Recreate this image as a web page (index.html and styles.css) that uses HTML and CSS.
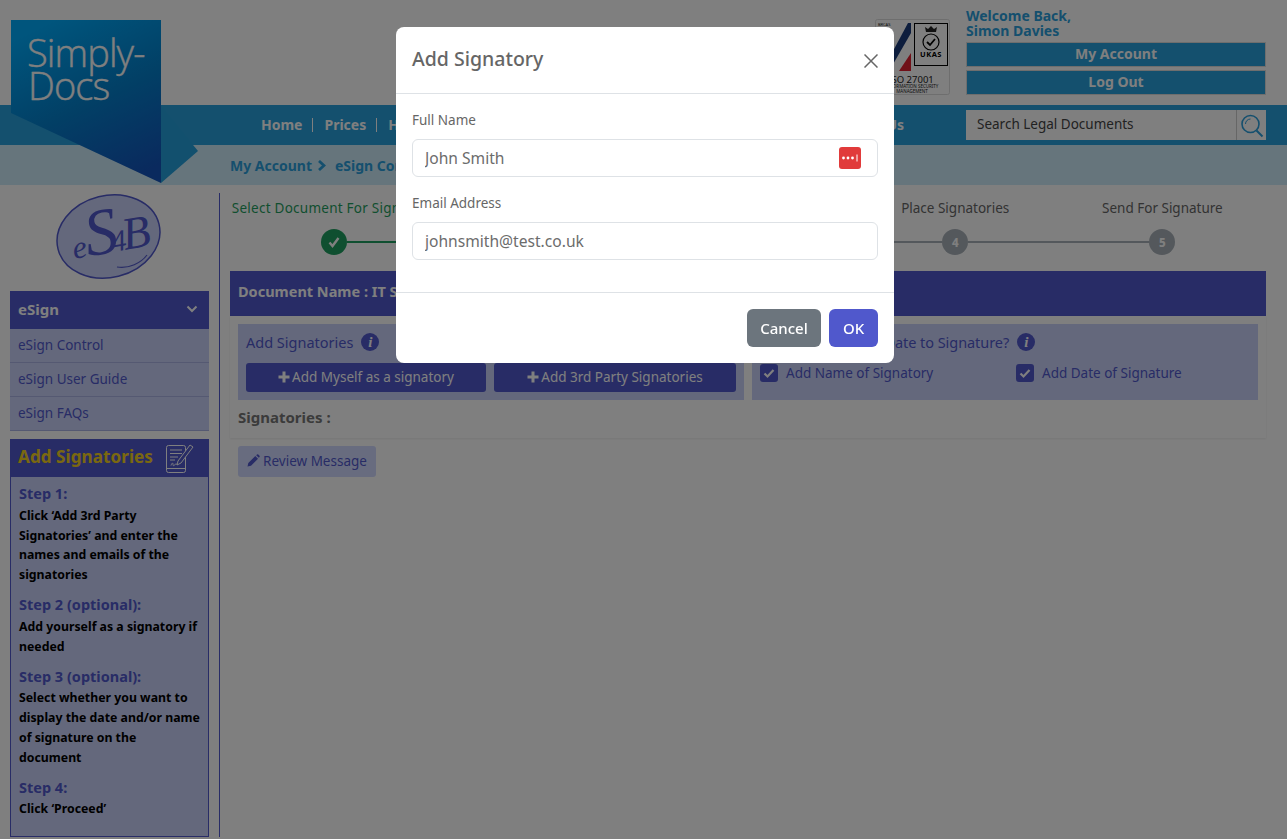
FILE: index.html
```html
<!DOCTYPE html>
<html lang="en">
<head>
<meta charset="utf-8">
<title>Add Signatory</title>
<link rel="stylesheet" href="styles.css">
</head>
<body>
<div class="logo">
  <svg width="187" height="163" viewBox="0 0 187 163">
    <defs><linearGradient id="lg" x1="0.3" y1="0" x2="0.75" y2="1"><stop offset="0" stop-color="#00aafa"/><stop offset="0.5" stop-color="#0480cc"/><stop offset="1" stop-color="#1454bc"/></linearGradient></defs>
    <polygon points="150,86 187,131 150,163" fill="#24a0dc"/>
    <polygon points="0,0 150,0 150,163 0,93" fill="url(#lg)"/>
    <text x="16" y="47" class="logo-text">Simply-</text>
    <text x="17" y="80" class="logo-text">Docs</text>
  </svg>
</div>
<header class="top">
  <div class="iso">
    <svg width="75" height="76" viewBox="0 0 75 76">
      <rect x="0.500" y="0.500" width="74" height="75" rx="2" fill="#fff" stroke="#ddd"/>
      <text x="3" y="7" class="iso-t">BRCAS</text>
      <polygon points="33,4 36,4 36,14 17,47 10,47" fill="#1a3a7a"/>
      <polygon points="36,34 36,52 24,52" fill="#e02030"/>
      <rect x="39.500" y="4.500" width="33" height="42" fill="#fff" stroke="#000"/>
      <path d="M51 13h10l1-5-3 2-3-3-3 3-3-2z" fill="#222"/>
      <circle cx="56" cy="23" r="8" fill="none" stroke="#000" stroke-width="1.200"/>
      <path d="M52 23l3 3 5-6" fill="none" stroke="#000" stroke-width="1.800"/>
      <text x="56" y="38" class="ukas">UKAS</text>
      <text x="36" y="64" class="iso-n">ISO 27001</text>
      <text x="37" y="69" class="iso-s">INFORMATION SECURITY</text>
      <text x="37" y="74" class="iso-s">MANAGEMENT</text>
    </svg>
  </div>
  <div class="account">
    <p class="welcome">Welcome Back,<br>Simon Davies</p>
    <a class="acct-btn">My Account</a>
    <a class="acct-btn">Log Out</a>
  </div>
</header>
<nav class="nav">
  <ul class="nav-list">
    <li>Home</li><li>Prices</li><li>Help</li>
  </ul>
  <span class="nav-end">Contact Us</span>
  <div class="search">
    <span class="search-text">Search Legal Documents</span>
    <span class="search-btn">
      <svg width="26" height="26" viewBox="0 0 26 26"><circle cx="11.500" cy="12" r="8.500" fill="none" stroke="#2a9fdc" stroke-width="1.600"/><path d="M6.500 12a5 5 0 0 1 5-5" fill="none" stroke="#2a9fdc" stroke-width="1"/><path d="M17.500 18.500l6 6" stroke="#2a9fdc" stroke-width="2"/></svg>
    </span>
  </div>
</nav>
<div class="crumbs"><span>My Account</span><svg class="crumb-sep" width="9" height="11" viewBox="0 0 9 11"><path d="M2 1l5 4.500-5 4.500" fill="none" stroke="#2a9fdc" stroke-width="2.800"/></svg><span>eSign Control</span></div>
<main class="main">
  <aside class="side">
    <div class="e4b">
      <svg width="108" height="90" viewBox="0 0 108 90">
        <ellipse cx="53.500" cy="43.500" rx="52" ry="41" transform="rotate(-14 53.500 43.500)" fill="#c9d1f8" stroke="#5058cc" stroke-width="1.500"/>
        <text x="17" y="60" class="e4b-text" transform="rotate(-10 52 50)"><tspan class="e4b-e">e</tspan><tspan class="e4b-s">S</tspan><tspan class="e4b-4">4</tspan><tspan class="e4b-b">B</tspan></text>
        <path d="M62 74c12 2 24-4 30-12" fill="none" stroke="#5058cc" stroke-width="1.200"/>
      </svg>
    </div>
    <section class="menu">
      <h2 class="menu-head">eSign<svg width="12" height="8" viewBox="0 0 12 8"><path d="M1.500 1.500l4.500 4.500 4.500-4.500" fill="none" stroke="#fff" stroke-width="2"/></svg></h2>
      <a class="menu-item">eSign Control</a>
      <a class="menu-item">eSign User Guide</a>
      <a class="menu-item">eSign FAQs</a>
    </section>
    <section class="help">
      <h2 class="help-head"><span class="help-title">Add Signatories</span>
        <svg width="28" height="30" viewBox="0 0 28 30" fill="none" stroke="#fff" stroke-width="1"><rect x="0.500" y="2.500" width="19" height="27" rx="2"/><path d="M0.500 25.500h19M4 7h12M4 10.500h12M4 14h8M4 17h5"/><path d="M5 22.500c1-3 2-3 2-1s1 1 2 0 2 0 3 0"/><path d="M12 18L24 2l3 2-12 16-4 2z" fill="#5058cc"/></svg>
      </h2>
      <div class="help-body">
        <h3>Step 1:</h3>
        <p>Click ‘Add 3rd Party Signatories’ and enter the names and emails of the signatories</p>
        <h3>Step 2 (optional):</h3>
        <p>Add yourself as a signatory if needed</p>
        <h3>Step 3 (optional):</h3>
        <p>Select whether you want to display the date and/or name of signature on the document</p>
        <h3>Step 4:</h3>
        <p>Click ‘Proceed’</p>
      </div>
    </section>
  </aside>
  <div class="content">
    <ol class="steps">
      <li class="step done"><span class="step-label">Select Document For Signature</span><span class="step-row"><i class="ln blank"></i><b class="dot"><svg width="14" height="14" viewBox="0 0 14 14"><path d="M2.500 7.500l3 3.500 6-8" fill="none" stroke="#fff" stroke-width="2.400"/></svg></b><i class="ln"></i></span></li>
      <li class="step done"><span class="step-label">Add Signatories</span><span class="step-row"><i class="ln"></i><b class="dot">2</b><i class="ln"></i></span></li>
      <li class="step"><span class="step-label">Add Message</span><span class="step-row"><i class="ln"></i><b class="dot">3</b><i class="ln"></i></span></li>
      <li class="step"><span class="step-label">Place Signatories</span><span class="step-row"><i class="ln"></i><b class="dot">4</b><i class="ln"></i></span></li>
      <li class="step"><span class="step-label">Send For Signature</span><span class="step-row"><i class="ln"></i><b class="dot">5</b><i class="ln blank"></i></span></li>
    </ol>
    <div class="doc-bar">Document Name : IT Services Agreement</div>
    <div class="card">
      <div class="panels">
        <section class="panel">
          <h3 class="panel-title">Add Signatories <b class="info">i</b></h3>
          <div class="panel-row">
            <a class="btn-primary"><svg class="plus" width="12" height="12" viewBox="0 0 12 12"><path d="M6 0.500v11M0.500 6h11" stroke="#fff" stroke-width="3"/></svg>Add Myself as a signatory</a>
            <a class="btn-primary"><svg class="plus" width="12" height="12" viewBox="0 0 12 12"><path d="M6 0.500v11M0.500 6h11" stroke="#fff" stroke-width="3"/></svg>Add 3rd Party Signatories</a>
          </div>
        </section>
        <section class="panel">
          <h3 class="panel-title panel-title-tight">Add Name and/or Date to Signature? <b class="info">i</b></h3>
          <div class="check-row">
            <label class="check"><svg width="18" height="18" viewBox="0 0 18 18"><rect width="18" height="18" rx="3" fill="#5058cc"/><path d="M4.500 9.500l3 3 6-6.500" fill="none" stroke="#fff" stroke-width="2.200"/></svg>Add Name of Signatory</label>
            <label class="check"><svg width="18" height="18" viewBox="0 0 18 18"><rect width="18" height="18" rx="3" fill="#5058cc"/><path d="M4.500 9.500l3 3 6-6.500" fill="none" stroke="#fff" stroke-width="2.200"/></svg>Add Date of Signature</label>
          </div>
        </section>
      </div>
      <p class="signatories">Signatories :</p>
    </div>
    <a class="btn-review"><svg width="13" height="13" viewBox="0 0 13 13"><path d="M0.500 12.500l0.800-3.500 7-7 2.700 2.700-7 7zM9.200 1.200l0.800-0.700a1 1 0 0 1 1.300 0l1.200 1.200a1 1 0 0 1 0 1.300l-0.700 0.800z" fill="#5058cc"/></svg>Review Message</a>
  </div>
</main>
<div class="backdrop"></div>
<div class="modal" role="dialog">
  <div class="modal-head">
    <h1>Add Signatory</h1>
    <svg width="14" height="14" viewBox="0 0 14 14"><path d="M0.500 0.500l13 13M13.500 0.500l-13 13" stroke="#666" stroke-width="1.500"/></svg>
  </div>
  <div class="modal-body">
    <label class="field-label">Full Name</label>
    <div class="input-wrap">
      <input class="field" value="John Smith" readonly>
      <span class="pw-icon"><svg width="22" height="22" viewBox="0 0 22 22"><rect width="22" height="22" rx="3" fill="#e13b3b"/><circle cx="4.500" cy="11" r="1.400" fill="#fff"/><circle cx="9" cy="11" r="1.400" fill="#fff"/><circle cx="13.500" cy="11" r="1.400" fill="#fff"/><path d="M18 7.500v7" stroke="#fff"/></svg></span>
    </div>
    <label class="field-label">Email Address</label>
    <input class="field" value="johnsmith@test.co.uk" readonly>
  </div>
  <div class="modal-foot">
    <button class="btn btn-cancel">Cancel</button>
    <button class="btn btn-ok">OK</button>
  </div>
</div>
</body>
</html>
```
FILE: styles.css
```css
* { box-sizing: border-box; }
html, body { margin: 0; height: 100%; overflow: hidden; }
body { font-family: "Noto Sans", "Open Sans", sans-serif; background: #fff; color: #333; font-size: 14px; }
ul, ol { list-style: none; margin: 0; padding: 0; }
h1, h2, h3, p { margin: 0; }

.logo { position: absolute; left: 11px; top: 20px; width: 187px; height: 163px; z-index: 2; }
.logo svg { display: block; }
.logo-text { font-family: "Open Sans", sans-serif; font-weight: 300; font-size: 38px; letter-spacing: -0.900px; fill: #fff; stroke: #fff; stroke-width: .4px; }

.top { height: 105px; display: flex; justify-content: flex-end; padding: 8px 21px 0 0; }
.iso { margin: 11px 16px 0 0; height: 76px; }
.iso svg { display: block; }
.iso-t { font-size: 4px; fill: #222; }
.ukas { font-size: 7.500px; font-weight: 700; text-anchor: middle; letter-spacing: .5px; fill: #000; }
.iso-n { font-size: 9.500px; text-anchor: middle; fill: #222; }
.iso-s { font-size: 4.500px; text-anchor: middle; fill: #222; }
.account { width: 300px; }
.welcome { color: #2a9fdc; font-weight: 700; font-size: 14px; line-height: 15px; margin-bottom: 4px; }
.acct-btn { display: block; height: 25px; margin-bottom: 3px; border: 1px solid #ddd; background: #28a0dc; color: #fff; font-weight: 700; font-size: 14px; line-height: 22px; text-align: center; }

.nav { height: 40px; background: #28a0dc; display: flex; align-items: center; padding: 0 21px 0 261px; color: #fff; font-weight: 700; font-size: 14px; }
.nav-list { display: flex; margin-bottom: 1px; }
.nav-list li { padding-right: 10px; margin-right: 11px; border-right: 1px solid #fff; line-height: 14px; }
.nav-end { margin-left: auto; margin-right: 62px; margin-bottom: 1px; }
.search { width: 300px; height: 30px; background: #fff; display: flex; align-items: center; }
.search-text { flex: 1; padding: 0 0 3px 11px; color: #444; font-weight: 400; font-size: 13.500px; }
.search-btn { width: 30px; height: 30px; border-left: 1px solid #ccc; display: flex; align-items: center; justify-content: center; }

.crumbs { height: 40px; background: #cdebf8; display: flex; align-items: center; gap: 5px; padding-left: 230px; color: #2a9fdc; font-weight: 700; font-size: 14px; }
.crumb-sep { margin: 0 4px 0 0; }

.main { display: flex; height: 652px; padding: 8px 21px 0 10px; gap: 10px; align-items: stretch; }
.side { width: 199px; flex: none; }
.e4b { height: 98px; display: flex; justify-content: center; }
.e4b svg { display: block; margin-left: -1px; }
.e4b-text { font-family: "Liberation Serif", serif; font-style: italic; fill: #5058cc; }
.e4b-e { font-size: 32px; }
.e4b-s { font-size: 66px; letter-spacing: -8px; }
.e4b-4 { font-size: 30px; letter-spacing: -3px; }
.e4b-b { font-size: 46px; }

.menu-head { height: 38px; background: #5058cc; color: #fff; font-size: 15px; font-weight: 700; display: flex; align-items: center; justify-content: space-between; padding: 0 11px 2px 8px; }
.menu-item { display: block; height: 34px; background: #c9d1f8; color: #5058cc; font-size: 13.500px; line-height: 32px; padding-left: 8px; border-bottom: 1px solid #aab2e4; }
.help { margin-top: 8px; }
.help-head { height: 38px; background: #5058cc; color: #f5d020; font-weight: 700; display: flex; align-items: center; justify-content: space-between; padding: 0 15px 0 8px; }
.help-title { font-size: 17.200px; margin-bottom: 3px; }
.help-body { height: 360px; background: #c9d1f8; border: 1px solid #5058cc; border-top: 0; padding: 6px 7px 0 8px; }
.help-body h3 { color: #5058cc; font-size: 14.500px; font-weight: 700; line-height: 20px; margin-bottom: 2.800px; }
.help-body p { color: #000; font-size: 12.300px; font-weight: 700; line-height: 19.700px; margin-bottom: 9.400px; }

.content { flex: 1; border-left: 1px solid #5058cc; padding-left: 10px; }
.steps { display: grid; grid-template-columns: repeat(5, 1fr); height: 78px; }
.step { display: flex; flex-direction: column; align-items: center; color: #666; font-size: 13.500px; }
.step-label { line-height: 18px; margin-top: 6px; white-space: nowrap; }
.step-row { display: flex; align-items: center; width: 100%; margin-top: 12px; }
.ln { flex: 1; height: 2px; background: #a8b0b8; }
.ln.blank { background: transparent; }
.dot { width: 26px; height: 26px; border-radius: 50%; background: #a8b0b8; color: #fff; font-size: 11.500px; font-weight: 800; display: flex; align-items: center; justify-content: center; }
.step.done { color: #1f9e60; }
.done .step-label { letter-spacing: .25px; }
.done .dot { background: #1f9e60; }
.done .ln { background: #1f9e60; }
.done .ln.blank { background: transparent; }

.doc-bar { height: 45px; background: #5058cc; color: #fff; font-weight: 700; font-size: 14.500px; padding: 10px 8px 0; line-height: 20px; }
.card { height: 122px; padding: 8px; box-shadow: 0 1px 2px rgba(0,0,0,.08); }
.panels { display: grid; grid-template-columns: 1fr 1fr; gap: 8px; }
.panel { height: 76px; background: #c9d1f8; padding: 8px; }
.panel-title { color: #5058cc; font-size: 14.500px; font-weight: 400; line-height: 20px; display: flex; align-items: center; gap: 4px; }
.panel-title-tight { letter-spacing: -.06px; }
.info { display: inline-flex; width: 18px; height: 18px; margin-left: 4px; border-radius: 50%; background: #5058cc; color: #fff; font-family: "Liberation Serif", serif; font-style: italic; font-size: 15px; align-items: center; justify-content: center; }
.panel-row { display: grid; grid-template-columns: 240px 242px; gap: 8px; margin-top: 11px; }
.check-row { display: grid; grid-template-columns: 256px 200px; margin-top: 12px; }
.btn-primary { height: 29px; background: #5058cc; color: #fff; border-radius: 3px; font-size: 13.500px; padding-bottom: 1px; display: flex; align-items: center; justify-content: center; gap: 2px; }
.check { color: #5058cc; font-size: 13.500px; display: flex; align-items: center; gap: 8px; }
.signatories { font-weight: 700; font-size: 15px; margin-top: 7px; line-height: 20px; color: #777; }
.btn-review { margin: 8px 0 0 8px; width: 138px; height: 31px; padding-bottom: 2px; background: #d0d8ff; border-radius: 3px; color: #5058cc; font-size: 13.500px; display: flex; align-items: center; justify-content: center; gap: 3px; }

.backdrop { position: fixed; inset: 0; background: rgba(0,0,0,.5); z-index: 5; }
.modal { position: fixed; left: 396px; top: 27px; width: 498px; height: 336px; background: #fff; border-radius: 8px; z-index: 6; display: flex; flex-direction: column; color: #666; }
.modal-head { height: 67px; border-bottom: 1px solid #dee2e6; display: flex; align-items: center; justify-content: space-between; padding: 0 16px; }
.modal-head h1 { font-size: 19.500px; font-weight: 500; line-height: 30px; margin-top: -2px; }
.modal-head svg { margin-top: 2px; }
.modal-body { height: 199px; padding: 16px 16px 0; border-bottom: 1px solid #dee2e6; }
.field-label { display: block; font-size: 13.500px; line-height: 20px; margin-bottom: 9px; }
.field { display: block; width: 100%; height: 38px; padding: 0 12px; margin-bottom: 16px; border: 1px solid #dee2e6; border-radius: 6px; font: 400 15.600px "Noto Sans", sans-serif; color: #6c6c6c; outline: 0; }
.input-wrap { position: relative; }
.pw-icon { position: absolute; right: 17px; top: 8px; width: 22px; height: 22px; }
.pw-icon svg { display: block; }
.modal-foot { flex: 1; display: flex; justify-content: flex-end; gap: 8px; padding: 16px; }
.btn { height: 38px; padding: 0 12px; border: 0; border-radius: 6px; color: #fff; font: 500 15px "Noto Sans", sans-serif; }
.btn-cancel { background: #6c757d; width: 74px; }
.btn-ok { background: #5058cc; width: 49px; }
```
